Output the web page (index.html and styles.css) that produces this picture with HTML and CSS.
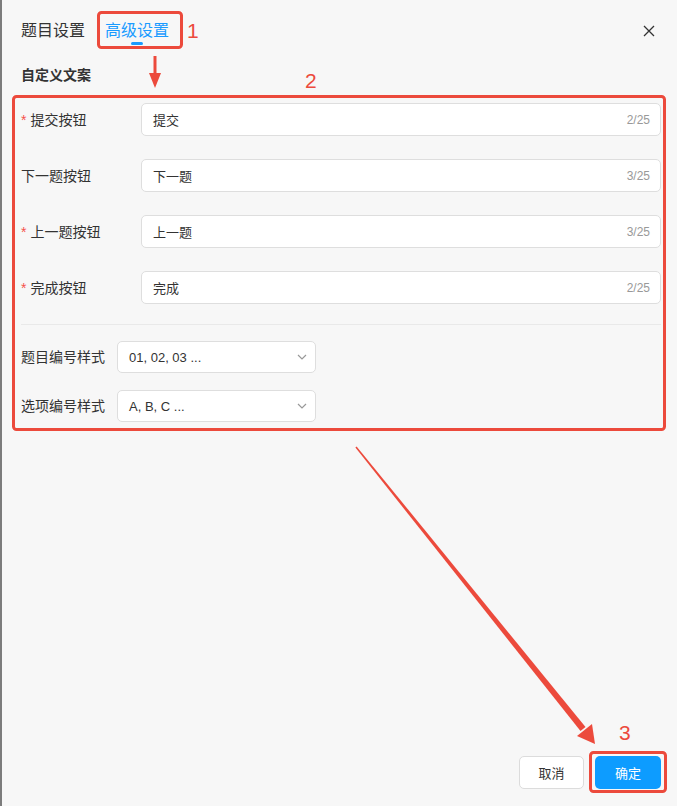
FILE: index.html
```html
<!DOCTYPE html>
<html lang="zh-CN">
<head>
    <meta charset="UTF-8">
    <meta name="viewport" content="width=device-width, initial-scale=1.0">
    <title>高级设置</title>
    <link rel="stylesheet" href="styles.css">
</head>
<body>
    <div class="dialog">
        <div class="header">
            <div class="tabs">
                <span class="tab">题目设置</span>
                <span class="tab active">高级设置</span>
            </div>
            <button class="close-btn" aria-label="关闭">
                <svg width="12" height="12" viewBox="0 0 12 12">
                    <path d="M1 1 L11 11 M11 1 L1 11" stroke="#333" stroke-width="1.3" fill="none"/>
                </svg>
            </button>
        </div>

        <div class="section-title">自定义文案</div>

        <div class="form">
            <div class="form-row">
                <label class="label"><span class="req">*</span>提交按钮</label>
                <div class="input">
                    <span class="value">提交</span>
                    <span class="count">2/25</span>
                </div>
            </div>
            <div class="form-row">
                <label class="label">下一题按钮</label>
                <div class="input">
                    <span class="value">下一题</span>
                    <span class="count">3/25</span>
                </div>
            </div>
            <div class="form-row">
                <label class="label"><span class="req">*</span>上一题按钮</label>
                <div class="input">
                    <span class="value">上一题</span>
                    <span class="count">3/25</span>
                </div>
            </div>
            <div class="form-row">
                <label class="label"><span class="req">*</span>完成按钮</label>
                <div class="input">
                    <span class="value">完成</span>
                    <span class="count">2/25</span>
                </div>
            </div>
        </div>

        <div class="divider"></div>

        <div class="select-list">
            <div class="select-row">
                <label class="label short">题目编号样式</label>
                <div class="select">
                    <span class="value">01, 02, 03 ...</span>
                    <svg class="chevron" width="10" height="6" viewBox="0 0 10 6">
                        <path d="M1 1 L5 5 L9 1" stroke="#999" stroke-width="1.2" fill="none"/>
                    </svg>
                </div>
            </div>
            <div class="select-row">
                <label class="label short">选项编号样式</label>
                <div class="select">
                    <span class="value">A, B, C ...</span>
                    <svg class="chevron" width="10" height="6" viewBox="0 0 10 6">
                        <path d="M1 1 L5 5 L9 1" stroke="#999" stroke-width="1.2" fill="none"/>
                    </svg>
                </div>
            </div>
        </div>

        <div class="footer">
            <button class="btn btn-cancel">取消</button>
            <button class="btn btn-primary">确定</button>
        </div>
    </div>

    <!-- annotation marks drawn on top of the screenshot -->
    <svg class="marks" width="677" height="806" viewBox="0 0 677 806">
        <g fill="none" stroke="#ec4a3c" stroke-width="3">
            <rect x="98.5" y="12.5" width="83" height="35" rx="3"/>
            <rect x="13.5" y="96.5" width="651" height="333" rx="3"/>
            <rect x="590.5" y="752.5" width="75" height="39" rx="3"/>
            <line x1="155" y1="56" x2="155" y2="76"/>
        </g>
        <g fill="#ec4a3c">
            <polygon points="149,73 161,73 155,88"/>
            <polygon points="355.4,447.6 356.6,446.4 585.5,727 580.5,731"/>
            <polygon points="595,744 577,736 592,724"/>
        </g>
        <g class="mark-num" fill="#ec4a3c">
            <text x="187" y="38">1</text>
            <text x="305" y="88">2</text>
            <text x="619" y="740">3</text>
        </g>
    </svg>
</body>
</html>
```

FILE: styles.css
```css
body {
    margin: 0;
    background-color: #f7f7f7;
    border-left: 2px solid #7c7c7c;
    font-family: "Liberation Sans", "Noto Sans CJK SC", sans-serif;
    color: #333;
    position: relative;
}

.dialog {
    display: flex;
    flex-direction: column;
    height: 806px;
    box-sizing: border-box;
    padding: 0 16px 17px 19px;
}

.header {
    display: flex;
    align-items: center;
    justify-content: space-between;
    height: 62px;
}

.tabs {
    display: flex;
    gap: 20px;
}

.tab {
    position: relative;
    font-size: 16px;
    line-height: 22px;
    color: #333;
}

.tab.active {
    color: #1a9bff;
}

.tab.active::after {
    content: "";
    position: absolute;
    left: 26px;
    bottom: -3px;
    width: 12px;
    height: 3px;
    border-radius: 2px;
    background-color: #1a9bff;
}

.close-btn {
    background: none;
    border: none;
    padding: 0;
    width: 12px;
    height: 12px;
    margin-right: 6px;
    display: flex;
    cursor: pointer;
}

.section-title {
    margin-top: 3px;
    font-size: 14px;
    line-height: 20px;
    font-weight: bold;
}

.form {
    display: flex;
    flex-direction: column;
    gap: 23px;
    margin-top: 18px;
}

.form-row,
.select-row {
    display: flex;
    align-items: center;
}

.label {
    width: 120px;
    flex-shrink: 0;
    font-size: 14px;
    line-height: 20px;
}

.label.short {
    width: 96px;
}

.req {
    color: #f5524b;
    margin-right: 4px;
}

.input {
    flex: 1;
    height: 33px;
    box-sizing: border-box;
    display: flex;
    align-items: center;
    justify-content: space-between;
    padding: 0 10px 0 11px;
    background: white;
    border: 1px solid #dedede;
    border-radius: 5px;
}

.value {
    font-size: 13px;
}

.count {
    font-size: 12px;
    color: #999;
}

.divider {
    height: 1px;
    background-color: #e9e9e9;
    margin-top: 20px;
}

.select-list {
    display: flex;
    flex-direction: column;
    gap: 17px;
    margin-top: 16px;
}

.select {
    width: 199px;
    height: 32px;
    box-sizing: border-box;
    display: flex;
    align-items: center;
    justify-content: space-between;
    padding: 0 8px 0 11px;
    background: white;
    border: 1px solid #dedede;
    border-radius: 5px;
}

.footer {
    margin-top: auto;
    display: flex;
    justify-content: flex-end;
    gap: 11px;
}

.btn {
    height: 33px;
    border-radius: 5px;
    font-family: inherit;
    font-size: 13px;
    cursor: pointer;
}

.btn-cancel {
    width: 65px;
    background: white;
    border: 1px solid #dcdcdc;
    color: #333;
}

.btn-primary {
    width: 66px;
    background-color: #0d9cff;
    border: none;
    color: white;
}

.marks {
    position: absolute;
    top: 0;
    left: -2px;
    pointer-events: none;
}

.mark-num {
    font-family: "Liberation Sans", sans-serif;
    font-size: 21px;
}
```
